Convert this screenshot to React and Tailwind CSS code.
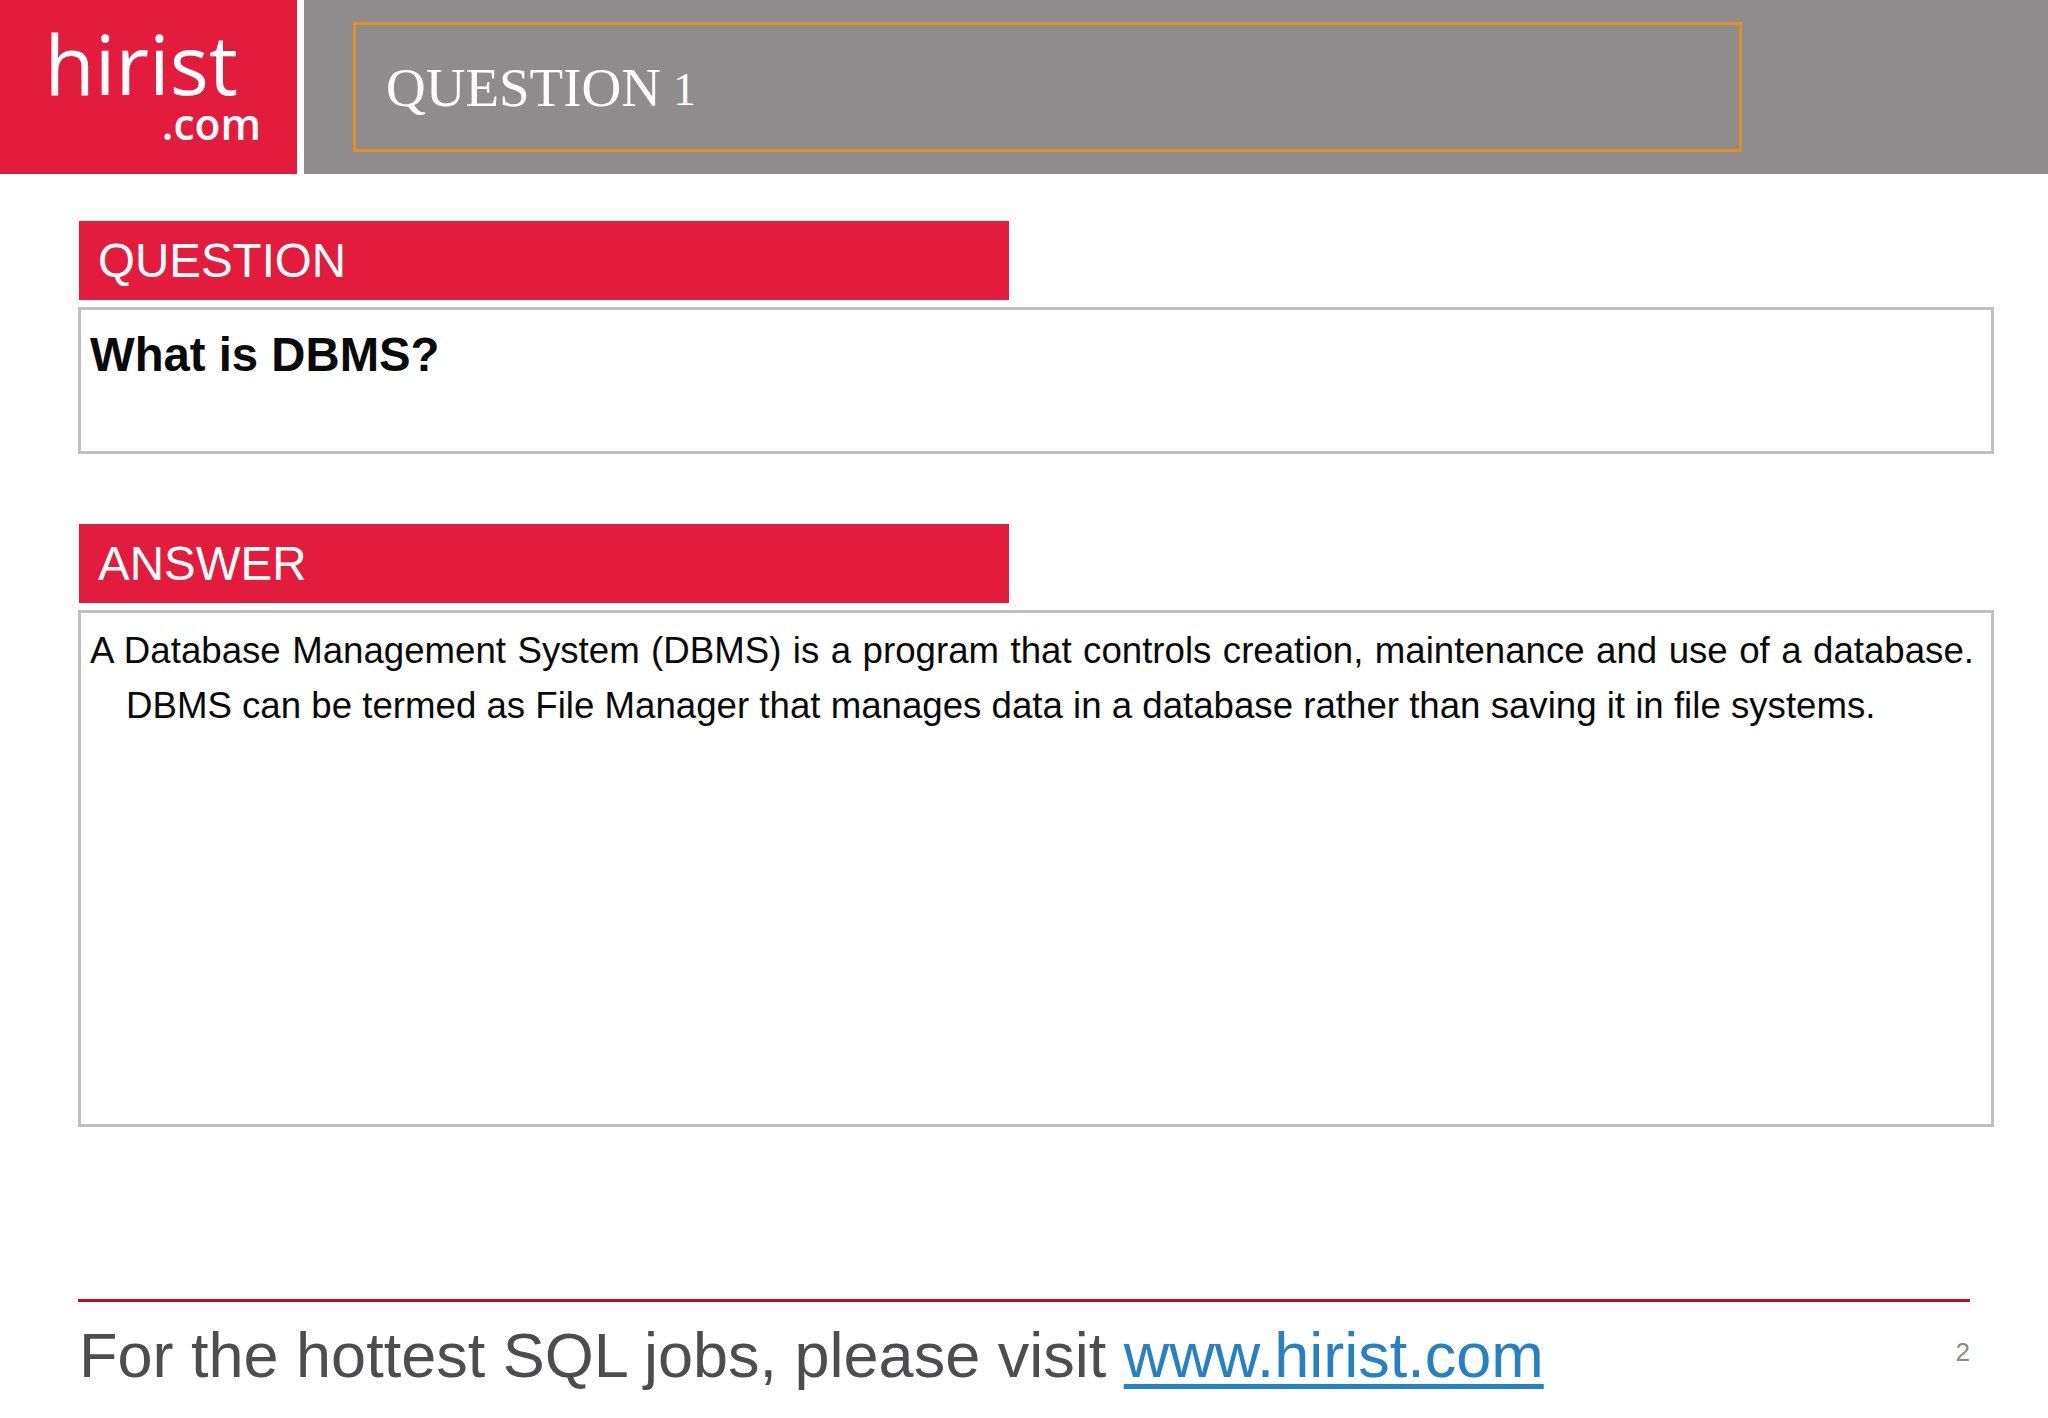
const sans = "font-['Liberation_Sans',Arial,sans-serif]"

function SectionBar({ children }) {
  return (
    <div className={`ml-[1px] flex h-[79px] w-[930px] items-center bg-[#e31b3c] pl-[19px] pt-[1px] text-[47.5px] leading-none text-white ${sans}`}>
      {children}
    </div>
  )
}

export default function App() {
  return (
    <div className={`flex h-[1418px] w-[2048px] flex-col overflow-hidden bg-white ${sans}`}>
      <header className="flex h-[174px] shrink-0 gap-[7px]">
        <div className="flex w-[297px] shrink-0 flex-col bg-[#e31b3c] pt-[27px] font-['Open_Sans',sans-serif] text-white">
          <span className="self-end pr-[59px] text-[82px] leading-[72px]">hirist</span>
          <span className="self-end pr-[36px] text-[42.5px] font-semibold leading-[50px]">.com</span>
        </div>
        <div className="flex-1 bg-[#8e8c8c] pl-[49px] pt-[22px]">
          <div className="flex h-[130px] w-[1389px] items-center border-[3px] border-[#e58e26] pl-[30px] font-['Liberation_Serif',serif] text-[55px] leading-none text-white">
            QUESTION <span className="ml-[12px] mt-[6px] text-[46px]">1</span>
          </div>
        </div>
      </header>

      <main className="ml-[78px] mt-[47px] w-[1916px]">
        <SectionBar>QUESTION</SectionBar>
        <div className="mt-[7px] h-[147px] border-[3px] border-[#c0c0c0] pl-[9px] pt-[17px] text-[47.3px] font-bold leading-[56px] text-[#0a0a0a]">
          What is DBMS?
        </div>

        <div className="mt-[70px]">
          <SectionBar>ANSWER</SectionBar>
        </div>
        <div className="mt-[7px] h-[517px] border-[3px] border-[#c0c0c0] pl-[9px] pr-[17px] pt-[10px] text-[36.65px] leading-[55px] text-[#0a0a0a]">
          <p className="pl-[36px] -indent-[36px] text-justify">
            A Database Management System (DBMS) is a program that controls creation, maintenance and use of a database. DBMS can be termed as File Manager that manages data in a database rather than saving it in file systems.
          </p>
        </div>
      </main>

      <footer className="ml-[78px] mt-[172px] w-[1892px]">
        <div className="h-[3px] bg-[#b5121b]" />
        <div className="flex items-start justify-between">
          <p className="pl-[1px] text-[63px] leading-[106px] text-[#4d4d4f]">
            For the hottest SQL jobs, please visit{' '}
            <a href="#" className="text-[#2581c4] underline decoration-[5px] underline-offset-[7px]">www.hirist.com</a>
          </p>
          <span className="mt-[37px] text-[26px] leading-none text-[#8c8b8b]">2</span>
        </div>
      </footer>
    </div>
  )
}
